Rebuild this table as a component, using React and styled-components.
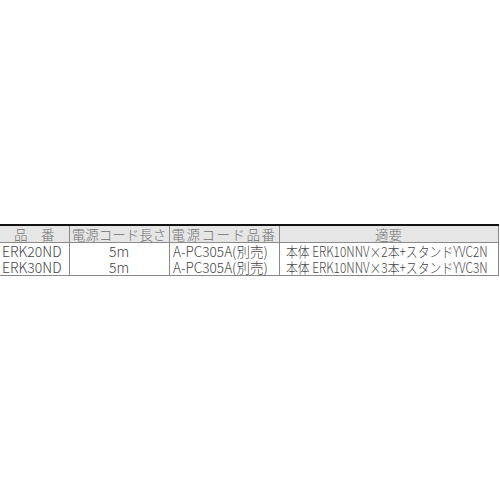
import React from "react";
import styled, { createGlobalStyle } from "styled-components";

const Global = createGlobalStyle`
  html, body { margin: 0; padding: 0; background: #fff; }
  body { font-family: "Noto Sans CJK JP", "Noto Sans", sans-serif; }
`;

const Page = styled.div`
  width: 500px;
  height: 500px;
  display: flex;
  flex-direction: column;
  justify-content: center;
`;

const Table = styled.table`
  width: 498px;
  border-collapse: collapse;
  table-layout: fixed;
  border-top: 2px solid #111;
  border-bottom: 1px solid #8a8a8a;
  border-right: 1px solid #8a8a8a;
  color: #444;
  font-size: 14px;
  font-weight: 300;
  line-height: 16px;
`;

const HeadCell = styled.th`
  background: #e6e6e6;
  font-weight: 300;
  font-size: 13.5px;
  color: #707070;
  text-align: center;
  padding: 0;
  height: 16px;
  white-space: nowrap;
  border-bottom: 1px solid #8a8a8a;
  border-left: ${(p) => (p.$first ? "none" : "1px solid #8a8a8a")};
  letter-spacing: ${(p) => p.$ls || "0"};
`;

const Cell = styled.td`
  padding: 0 0 0 ${(p) => p.$pl || "0"};
  height: 16px;
  white-space: nowrap;
  text-align: ${(p) => p.$align || "left"};
  border-left: ${(p) => (p.$first ? "none" : "1px solid #8a8a8a")};
`;

const Narrow = styled.span`
  display: inline-block;
  transform: scaleX(${(p) => p.$sx});
  transform-origin: left center;
  margin-right: ${(p) => p.$mr};
`;

const rows = [
  ["ERK20ND", "5m", "A-PC305A(別売)", "本体 ERK10NNV×2本+スタンドYVC2N"],
  ["ERK30ND", "5m", "A-PC305A(別売)", "本体 ERK10NNV×3本+スタンドYVC3N"],
];

export default function App() {
  return (
    <>
      <Global />
      <Page>
        <Table>
          <colgroup>
            <col style={{ width: 69 }} />
            <col style={{ width: 100 }} />
            <col style={{ width: 110 }} />
            <col style={{ width: 219 }} />
          </colgroup>
          <thead>
            <tr>
              <HeadCell $first>品　番</HeadCell>
              <HeadCell>電源コード長さ</HeadCell>
              <HeadCell $ls="1.5px">電源コード品番</HeadCell>
              <HeadCell>適要</HeadCell>
            </tr>
          </thead>
          <tbody>
            {rows.map((r) => (
              <tr key={r[0]}>
                <Cell $first $pl="2px">{r[0]}</Cell>
                <Cell $align="center">{r[1]}</Cell>
                <Cell $pl="3px">
                  <Narrow $sx={0.97} $mr="-4px">{r[2]}</Narrow>
                </Cell>
                <Cell $pl="6px">
                  <Narrow $sx={0.845} $mr="-40px">{r[3]}</Narrow>
                </Cell>
              </tr>
            ))}
          </tbody>
        </Table>
      </Page>
    </>
  );
}
